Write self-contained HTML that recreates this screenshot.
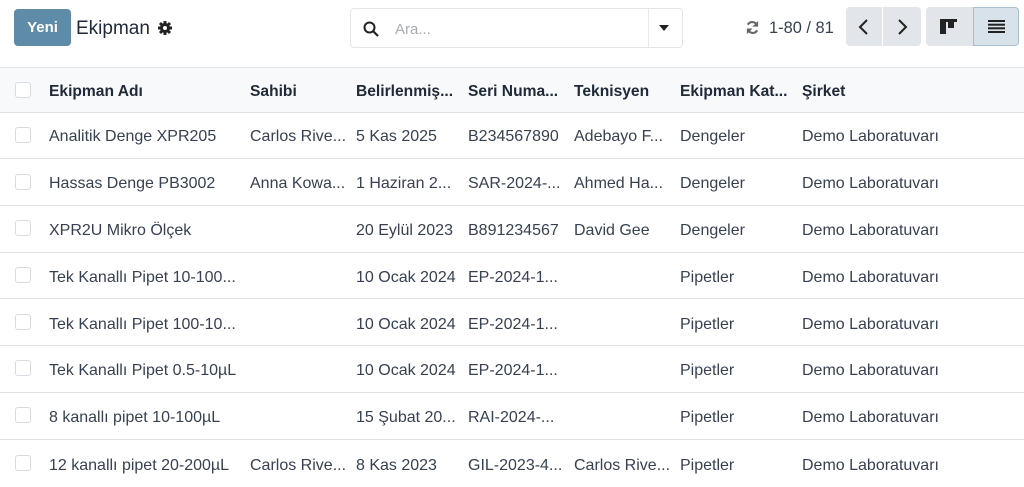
<!DOCTYPE html>
<html><head><meta charset="utf-8"><style>
*{box-sizing:border-box;margin:0;padding:0}
body{width:1024px;height:483px;overflow:hidden;background:#fff;font-family:"Liberation Sans",sans-serif;font-size:16px;color:#374151;position:relative}
.abs{position:absolute}
.btn{position:absolute;background:#5e8ca8;color:#fff;font-weight:bold;border-radius:4px;left:14px;top:9px;width:57px;height:37px;line-height:37px;text-align:center;font-size:15px}
.title{left:76px;top:18px;font-size:19px;color:#1f2937}
.search{left:350px;top:8px;width:333px;height:40px;border:1px solid #e2e5e9;border-radius:4px;font-size:15px}
.pg{top:7px;height:39px;background:#e2e5e9;border-radius:4px}
.row{position:absolute;left:0;width:1024px;border-bottom:1px solid #dee2e6}
.cell{position:absolute;white-space:nowrap;color:#374151;line-height:18px;margin-top:2px}
.cb{position:absolute;left:15px;width:16px;height:16px;border:1px solid #d8dbe0;border-radius:3px;background:#fff}
.hd .cell{font-weight:bold;color:#1f2937;font-size:15.6px;margin-top:1px}
</style></head><body>
<div class="btn">Yeni</div>
<div class="abs title">Ekipman</div>
<svg class="abs" style="left:157px;top:20px" width="16" height="16" viewBox="0 0 16 16"><g fill="#222"><circle cx="8" cy="8" r="5"/><g stroke="#222" stroke-width="3"><line x1="8" y1="1" x2="8" y2="15"/><line x1="1" y1="8" x2="15" y2="8"/><line x1="3" y1="3" x2="13" y2="13"/><line x1="13" y1="3" x2="3" y2="13"/></g></g><circle cx="8" cy="8" r="2" fill="#fff"/></svg>
<div class="abs search">
<svg class="abs" style="left:12px;top:12px" width="16" height="16" viewBox="0 0 16 16"><circle cx="6.5" cy="6.5" r="5" fill="none" stroke="#222" stroke-width="2"/><line x1="10" y1="10" x2="15" y2="15" stroke="#222" stroke-width="2.2"/></svg>
<div class="abs" style="left:44px;top:12px;color:#a8adb5">Ara...</div>
<div class="abs" style="left:297px;top:0;width:1px;height:38px;background:#e8eaed"></div>
<div class="abs" style="left:308px;top:16px;width:0;height:0;border-left:5px solid transparent;border-right:5px solid transparent;border-top:6px solid #222"></div>
</div>
<svg class="abs" style="left:745px;top:20px" width="15" height="15" viewBox="0 0 16 16"><path d="M13 6A5.5 5.5 0 0 0 3 5M3 10a5.5 5.5 0 0 0 10 1" fill="none" stroke="#666" stroke-width="2.2"/><path d="M14 1v6H8zM2 15V9h6z" fill="#666"/></svg>
<div class="abs" style="left:769px;top:19px;color:#374151;font-size:16.4px">1-80 / 81</div>
<div class="abs pg" style="left:846px;width:75px"><div class="abs" style="left:36px;top:0;width:1px;height:39px;background:#fff"></div>
<svg class="abs" style="left:11px;top:11px" width="14" height="18" viewBox="0 0 14 18"><path d="M10 2 3 9l7 7" fill="none" stroke="#222" stroke-width="2"/></svg>
<svg class="abs" style="left:49px;top:11px" width="14" height="18" viewBox="0 0 14 18"><path d="M4 2l7 7-7 7" fill="none" stroke="#222" stroke-width="2"/></svg></div>
<div class="abs pg" style="left:926px;width:93px"><div class="abs" style="left:47px;top:0;width:46px;height:39px;background:#d8e2ea;border:1px solid #a9c0d0;border-radius:0 4px 4px 0"></div>
<svg class="abs" style="left:14px;top:12px" width="17" height="15" viewBox="0 0 17 15"><rect x="0" y="0" width="17" height="3" fill="#222"/><rect x="0" y="0" width="6" height="15" fill="#222"/><rect x="8" y="0" width="6" height="9" fill="#222"/></svg>
<svg class="abs" style="left:62px;top:13px" width="17" height="13" viewBox="0 0 17 13"><g fill="#222"><rect y="0" width="17" height="2"/><rect y="3.7" width="17" height="2"/><rect y="7.3" width="17" height="2"/><rect y="11" width="17" height="2"/></g></svg></div>

<div class="row hd" style="top:67px;height:46px;background:#f8f9fa;border-top:1px solid #e2e5e9">
<div class="cb" style="top:14px"></div>
<div class="cell" style="left:49px;top:14px">Ekipman Adı</div>
<div class="cell" style="left:250px;top:14px">Sahibi</div>
<div class="cell" style="left:356px;top:14px">Belirlenmiş...</div>
<div class="cell" style="left:468px;top:14px">Seri Numa...</div>
<div class="cell" style="left:574px;top:14px">Teknisyen</div>
<div class="cell" style="left:680px;top:14px">Ekipman Kat...</div>
<div class="cell" style="left:802px;top:14px">Şirket</div>
</div>

<div class="row" style="top:113px;height:46px"><div class="cb" style="top:14px"></div><div class="cell" style="left:49px;top:13px">Analitik Denge XPR205</div><div class="cell" style="left:250px;top:13px">Carlos Rive...</div><div class="cell" style="left:356px;top:13px">5 Kas 2025</div><div class="cell" style="left:468px;top:13px">B234567890</div><div class="cell" style="left:574px;top:13px">Adebayo F...</div><div class="cell" style="left:680px;top:13px">Dengeler</div><div class="cell" style="left:802px;top:13px">Demo Laboratuvarı</div></div>
<div class="row" style="top:159px;height:47px"><div class="cb" style="top:15px"></div><div class="cell" style="left:49px;top:14px">Hassas Denge PB3002</div><div class="cell" style="left:250px;top:14px">Anna Kowa...</div><div class="cell" style="left:356px;top:14px">1 Haziran 2...</div><div class="cell" style="left:468px;top:14px">SAR-2024-...</div><div class="cell" style="left:574px;top:14px">Ahmed Ha...</div><div class="cell" style="left:680px;top:14px">Dengeler</div><div class="cell" style="left:802px;top:14px">Demo Laboratuvarı</div></div>
<div class="row" style="top:206px;height:47px"><div class="cb" style="top:14px"></div><div class="cell" style="left:49px;top:14px">XPR2U Mikro Ölçek</div><div class="cell" style="left:356px;top:14px">20 Eylül 2023</div><div class="cell" style="left:468px;top:14px">B891234567</div><div class="cell" style="left:574px;top:14px">David Gee</div><div class="cell" style="left:680px;top:14px">Dengeler</div><div class="cell" style="left:802px;top:14px">Demo Laboratuvarı</div></div>
<div class="row" style="top:253px;height:46px"><div class="cb" style="top:14px"></div><div class="cell" style="left:49px;top:14px">Tek Kanallı Pipet 10-100...</div><div class="cell" style="left:356px;top:14px">10 Ocak 2024</div><div class="cell" style="left:468px;top:14px">EP-2024-1...</div><div class="cell" style="left:680px;top:14px">Pipetler</div><div class="cell" style="left:802px;top:14px">Demo Laboratuvarı</div></div>
<div class="row" style="top:299px;height:47px"><div class="cb" style="top:15px"></div><div class="cell" style="left:49px;top:15px">Tek Kanallı Pipet 100-10...</div><div class="cell" style="left:356px;top:15px">10 Ocak 2024</div><div class="cell" style="left:468px;top:15px">EP-2024-1...</div><div class="cell" style="left:680px;top:15px">Pipetler</div><div class="cell" style="left:802px;top:15px">Demo Laboratuvarı</div></div>
<div class="row" style="top:346px;height:47px"><div class="cb" style="top:14px"></div><div class="cell" style="left:49px;top:14px">Tek Kanallı Pipet 0.5-10µL</div><div class="cell" style="left:356px;top:14px">10 Ocak 2024</div><div class="cell" style="left:468px;top:14px">EP-2024-1...</div><div class="cell" style="left:680px;top:14px">Pipetler</div><div class="cell" style="left:802px;top:14px">Demo Laboratuvarı</div></div>
<div class="row" style="top:393px;height:47px"><div class="cb" style="top:14px"></div><div class="cell" style="left:49px;top:14px">8 kanallı pipet 10-100µL</div><div class="cell" style="left:356px;top:14px">15 Şubat 20...</div><div class="cell" style="left:468px;top:14px">RAI-2024-...</div><div class="cell" style="left:680px;top:14px">Pipetler</div><div class="cell" style="left:802px;top:14px">Demo Laboratuvarı</div></div>
<div class="row" style="top:440px;height:47px;border-bottom:none"><div class="cb" style="top:15px"></div><div class="cell" style="left:49px;top:15px">12 kanallı pipet 20-200µL</div><div class="cell" style="left:250px;top:15px">Carlos Rive...</div><div class="cell" style="left:356px;top:15px">8 Kas 2023</div><div class="cell" style="left:468px;top:15px">GIL-2023-4...</div><div class="cell" style="left:574px;top:15px">Carlos Rive...</div><div class="cell" style="left:680px;top:15px">Pipetler</div><div class="cell" style="left:802px;top:15px">Demo Laboratuvarı</div></div>
</body></html>
